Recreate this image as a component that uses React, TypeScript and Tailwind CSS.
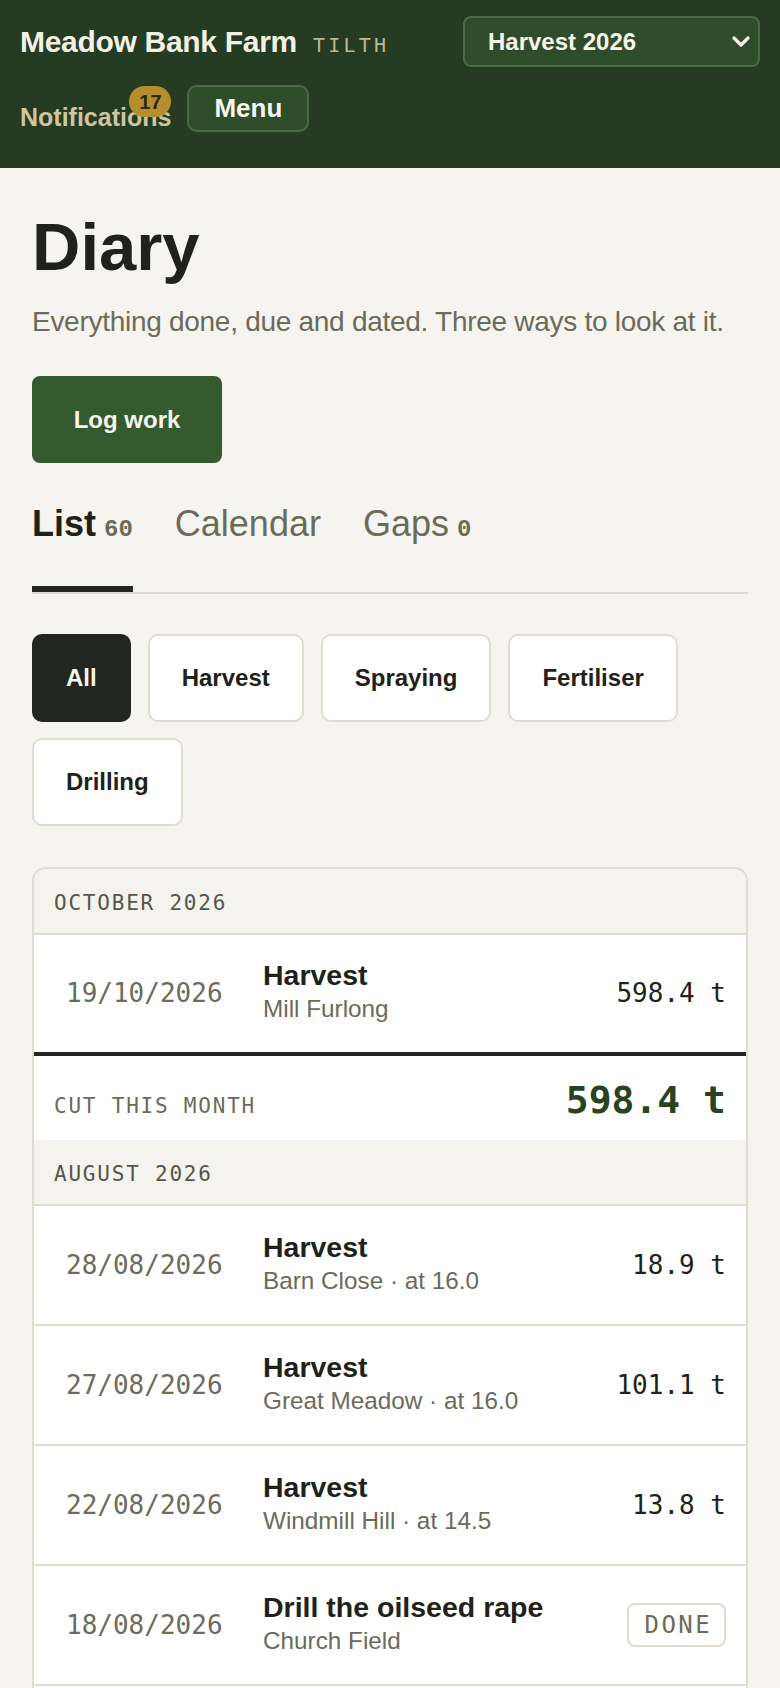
import React from 'react';

type Entry = {
  date: string;
  title: string;
  place: string;
  value?: string;
  done?: boolean;
};

type Month = {
  label: string;
  entries: Entry[];
  total?: string;
};

const months: Month[] = [
  {
    label: 'October 2026',
    entries: [{ date: '19/10/2026', title: 'Harvest', place: 'Mill Furlong', value: '598.4 t' }],
    total: '598.4 t',
  },
  {
    label: 'August 2026',
    entries: [
      { date: '28/08/2026', title: 'Harvest', place: 'Barn Close · at 16.0', value: '18.9 t' },
      { date: '27/08/2026', title: 'Harvest', place: 'Great Meadow · at 16.0', value: '101.1 t' },
      { date: '22/08/2026', title: 'Harvest', place: 'Windmill Hill · at 14.5', value: '13.8 t' },
      { date: '18/08/2026', title: 'Drill the oilseed rape', place: 'Church Field', done: true },
      { date: '14/08/2026', title: 'Harvest', place: 'Long Acre · at 15.2', value: '64.2 t' },
    ],
    total: '198.2 t',
  },
];

const filters = ['All', 'Harvest', 'Spraying', 'Fertiliser', 'Drilling'];

const EntryRow: React.FC<{ entry: Entry; last: boolean }> = ({ entry, last }) => (
  <div
    className={
      last
        ? 'flex h-[117px] items-center bg-white pl-8 pr-5'
        : 'flex h-[120px] items-center border-b-2 border-[#e0ddd1] bg-white pl-8 pr-5'
    }
  >
    <span className="w-[197px] shrink-0 font-['DejaVu_Sans_Mono',monospace] text-[26px] text-[#6b6b5a]">
      {entry.date}
    </span>
    <div className="min-w-0 flex-1 -translate-y-[2px]">
      <div className="text-[28.5px] font-bold leading-[35px] text-[#1f2219]">{entry.title}</div>
      <div className="text-[24.3px] leading-[32px] text-[#6b6b5a]">{entry.place}</div>
    </div>
    {entry.done ? (
      <span className="flex h-[44px] items-center rounded-lg border-2 border-[#dfdcd0] pl-4 pr-[12px] font-['DejaVu_Sans_Mono',monospace] text-[24px] tracking-[0.1em] text-[#6b6b5a]">
        DONE
      </span>
    ) : (
      <span className="font-['DejaVu_Sans_Mono',monospace] text-[26px] text-[#1f2219]">{entry.value}</span>
    )}
  </div>
);

export default function App() {
  return (
    <div className="min-h-screen bg-[#f5f4ef] font-['Liberation_Sans',Arial,sans-serif] text-[#1f2219]">
      <header className="bg-[#253c22] px-5 pt-4 pb-[36px]">
        <div className="flex h-[51px] items-center justify-between">
          <div className="flex items-baseline gap-4">
            <span className="text-[30px] font-bold tracking-[-0.01em] text-[#f3f1e6]">Meadow Bank Farm</span>
            <span className="font-['DejaVu_Sans_Mono',monospace] text-[20px] tracking-[0.16em] text-[#bdb890]">
              TILTH
            </span>
          </div>
          <button className="flex h-[51px] w-[297px] items-center justify-between rounded-lg border-2 border-[#4a6a45] bg-[#2f4d2b] pl-[23px] pr-[7px] text-[24px] font-bold text-[#f7f5ec]">
            Harvest 2026
            <svg width="20" height="13" viewBox="0 0 20 13" fill="none">
              <polyline points="3,3 10,10 17,3" stroke="#f7f5ec" strokeWidth="3.2" strokeLinecap="round" strokeLinejoin="round" />
            </svg>
          </button>
        </div>
        <div className="mt-[17px] flex items-center gap-4">
          <span className="relative pt-[18px] text-[25px] font-bold leading-[30px] text-[#cdc6a0]">
            Notifications
            <span className="absolute right-0 top-[2px] flex h-[31px] w-[42px] items-center justify-center rounded-full bg-[#b58e2e] text-[20px] font-bold text-[#2b2816]">
              17
            </span>
          </span>
          <button className="h-[47px] rounded-[10px] border-2 border-[#4a6a45] bg-[#2f4d2b] px-[25px] text-[26px] font-bold text-[#f7f5ec]">
            Menu
          </button>
        </div>
      </header>

      <main className="px-8 pt-[46px] pb-10">
        <h1 className="text-[67px] font-bold leading-[66px] text-[#1f2219]">Diary</h1>
        <p className="mt-[21px] text-[28px] leading-[42px] tracking-[-0.01em] text-[#6b6b5a]">
          Everything done, due and dated. Three ways to look at it.
        </p>
        <button className="mt-[33px] block h-[87px] w-[190px] rounded-lg bg-[#355a30] text-[24px] font-bold text-[#f7f5ec]">
          Log work
        </button>

        <nav className="mt-[39px] flex gap-[42px] border-b-2 border-[#dedbcc]">
          <div className="flex items-baseline gap-[8px] border-b-[6px] border-[#22261e] pb-[38px]">
            <span className="text-[36px] font-bold leading-[43px] text-[#1f2219]">List</span>
            <span className="font-['Liberation_Mono',monospace] text-[24px] font-bold text-[#6b6b5a]">60</span>
          </div>
          <div className="flex items-baseline border-b-[6px] border-transparent pb-[38px]">
            <span className="text-[36px] leading-[43px] text-[#6b6b5a]">Calendar</span>
          </div>
          <div className="flex items-baseline gap-[8px] border-b-[6px] border-transparent pb-[38px]">
            <span className="text-[36px] leading-[43px] text-[#6b6b5a]">Gaps</span>
            <span className="font-['Liberation_Mono',monospace] text-[24px] font-bold text-[#6b6b5a]">0</span>
          </div>
        </nav>

        <div className="mt-[40px] flex flex-wrap gap-x-[17px] gap-y-4">
          {filters.map((f) =>
            f === 'All' ? (
              <button
                key={f}
                className="h-[88px] rounded-[10px] border-2 border-[#22261e] bg-[#22261e] px-8 text-[24px] font-bold text-[#f7f5ec]"
              >
                {f}
              </button>
            ) : (
              <button
                key={f}
                className="h-[88px] rounded-[10px] border-2 border-[#dfdcd0] bg-white px-8 text-[24px] font-bold text-[#1f2219]"
              >
                {f}
              </button>
            )
          )}
        </div>

        <div className="mt-[41px] overflow-hidden rounded-[14px] border-2 border-[#dfdcd0] bg-white">
          {months.map((m) => (
            <section key={m.label}>
              <div className="flex h-[66px] items-center border-b-2 border-[#dfdcd0] bg-[#f4f3ee] px-5 pt-[6px] font-['DejaVu_Sans_Mono',monospace] text-[21px] uppercase tracking-[0.085em] text-[#55564a]">
                {m.label}
              </div>
              {m.entries.map((e, i) => (
                <EntryRow key={e.date + e.title} entry={e} last={i === m.entries.length - 1 && !!m.total} />
              ))}
              {m.total && (
                <div className="flex h-[88px] items-baseline justify-between border-t-4 border-[#22261e] bg-white px-5 pt-[22px]">
                  <span className="font-['DejaVu_Sans_Mono',monospace] text-[21px] tracking-[0.085em] text-[#6b6b5a]">
                    CUT THIS MONTH
                  </span>
                  <span className="font-['DejaVu_Sans_Mono',monospace] text-[38px] font-bold leading-[44px] text-[#27431f]">
                    {m.total}
                  </span>
                </div>
              )}
            </section>
          ))}
        </div>
      </main>
    </div>
  );
}
